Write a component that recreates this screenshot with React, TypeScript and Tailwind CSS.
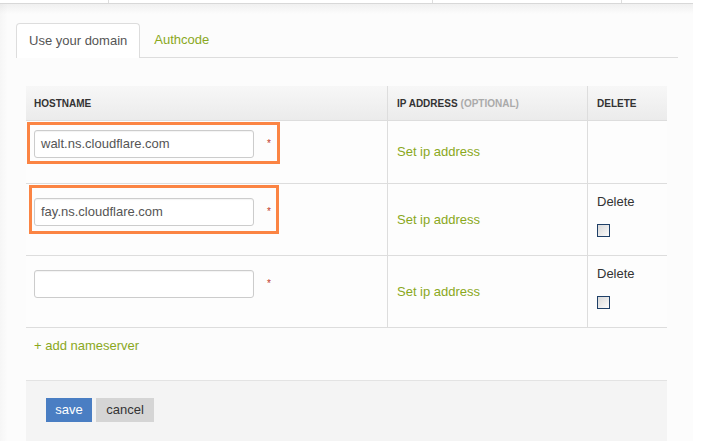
import React from "react";

const GREEN = "text-[#8aa81c]";

function Checkbox() {
  return (
    <span className="block w-[13px] h-[13px] border border-[#1f4068] bg-[linear-gradient(135deg,#d9d9d9,#fbfbfb)]" />
  );
}

function HostCell({ value, box }: { value: string; box?: "a" | "b" }) {
  return (
    <div className="w-[362px] border-r border-[#dddddd] pl-[8px] flex items-center">
      <div className="relative">
        {box === "a" && (
          <div className="absolute left-[-7px] top-[-8px] w-[253px] h-[42px] border-[3px] border-[#fb8443]" />
        )}
        {box === "b" && (
          <div className="absolute left-[-5px] top-[-13px] w-[250px] h-[49px] border-[3px] border-[#fb8443]" />
        )}
        <div className="flex items-center">
          <div className="w-[220px] h-[28px] rounded-[3px] border border-[#cccccc] bg-white pl-[6px] flex items-center text-[13px] text-[#555555] shadow-[inset_0_1px_1px_rgba(0,0,0,0.05)]">
            {value}
          </div>
          <span className="ml-[13px] text-[10px] text-[#c0392b] leading-none">*</span>
        </div>
        <div className="h-[16px]" />
      </div>
    </div>
  );
}

function IpCell() {
  return (
    <div className="w-[200px] border-r border-[#dddddd] pl-[9px] flex items-center">
      <span className={`text-[13px] ${GREEN}`}>Set ip address</span>
    </div>
  );
}

function DeleteCell({ show }: { show: boolean }) {
  if (!show) return <div className="flex-1" />;
  return (
    <div className="flex-1 pl-[9px] pt-[10px] pb-[18px]">
      <div className="text-[13px] leading-[16px] text-[#333333]">Delete</div>
      <div className="mt-[14px]">
        <Checkbox />
      </div>
    </div>
  );
}

export default function App() {
  return (
    <div
      className="w-[702px] h-[441px] overflow-hidden flex bg-white"
      style={{ fontFamily: '"Liberation Sans", Arial, sans-serif' }}
    >
      <div className="w-[693px] h-full flex flex-col bg-[linear-gradient(to_right,rgba(0,0,0,0.025),transparent_8px),linear-gradient(to_bottom,#ebebeb,#fcfcfc_14px)]">
        {/* top strip */}
        <div className="h-[4px] flex border-b border-[#d8d8d8] bg-white shrink-0">
          <div className="w-[109px] border-r border-[#dddddd]" />
          <div className="w-[324px] border-r border-[#dddddd]" />
          <div className="w-[189px] border-r border-[#dddddd]" />
          <div className="flex-1" />
        </div>

        {/* tabs */}
        <div className="ml-[16px] mr-[15px] mt-[18px] flex items-end border-b border-[#dddddd] shrink-0">
          <div className="h-[35px] px-[12px] flex items-center border border-b-0 border-[#dddddd] rounded-t-[4px] bg-white text-[13px] text-[#555555] mb-[-1px] pb-[1px]">
            Use your domain
          </div>
          <div className={`h-[35px] ml-[1px] px-[13px] flex items-center text-[13px] ${GREEN}`}>
            Authcode
          </div>
        </div>

        {/* table */}
        <div className="ml-[26px] w-[641px] mt-[28px] flex flex-col">
          <div className="h-[35px] flex border-b border-[#dddddd] bg-[linear-gradient(to_bottom,#f7f7f7,#ebebeb)] text-[10px] font-bold text-[#333333]">
            <div className="w-[362px] border-r border-[#dddddd] pl-[8px] flex items-center">HOSTNAME</div>
            <div className="w-[200px] border-r border-[#dddddd] pl-[9px] flex items-center">
              IP ADDRESS<span className="ml-[3px] text-[#aaaaaa]">(OPTIONAL)</span>
            </div>
            <div className="flex-1 pl-[9px] flex items-center">DELETE</div>
          </div>

          <div className="flex border-b border-[#dddddd] bg-[#fdfdfd]">
            <div className="w-[362px] border-r border-[#dddddd] pl-[8px] py-[9px] flex items-center">
              <div className="relative">
                <div className="absolute left-[-7px] top-[-8px] w-[253px] h-[42px] border-[3px] border-[#fb8443]" />
                <div className="flex items-center">
                  <div className="w-[220px] h-[28px] rounded-[3px] border border-[#cccccc] bg-white pl-[6px] flex items-center text-[13px] text-[#555555] shadow-[inset_0_1px_1px_rgba(0,0,0,0.05)]">
                    walt.ns.cloudflare.com
                  </div>
                  <span className="ml-[13px] text-[10px] text-[#c0392b] leading-none">*</span>
                </div>
                <div className="h-[16px]" />
              </div>
            </div>
            <IpCell />
            <DeleteCell show={false} />
          </div>

          <div className="flex border-b border-[#dddddd] bg-[#fdfdfd]">
            <HostCell value="fay.ns.cloudflare.com" box="b" />
            <IpCell />
            <DeleteCell show={true} />
          </div>

          <div className="flex border-b border-[#dddddd] bg-[#fdfdfd]">
            <HostCell value="" />
            <IpCell />
            <DeleteCell show={true} />
          </div>

          <div className={`h-[52px] pl-[8px] pt-[10px] text-[13px] leading-[16px] ${GREEN}`}>
            + add nameserver
          </div>

          <div className="h-[80px] border-t border-[#e3e3e3] bg-[#f4f4f4] pl-[20px] pt-[17px] flex items-start gap-[4px]">
            <div className="h-[24px] w-[46px] bg-[#4a7ec3] text-white text-[13px] flex items-center justify-center">
              save
            </div>
            <div className="h-[24px] w-[58px] bg-[#d5d5d5] text-[#333333] text-[13px] flex items-center justify-center">
              cancel
            </div>
          </div>
        </div>
      </div>
      <div className="flex-1 bg-white" />
    </div>
  );
}
